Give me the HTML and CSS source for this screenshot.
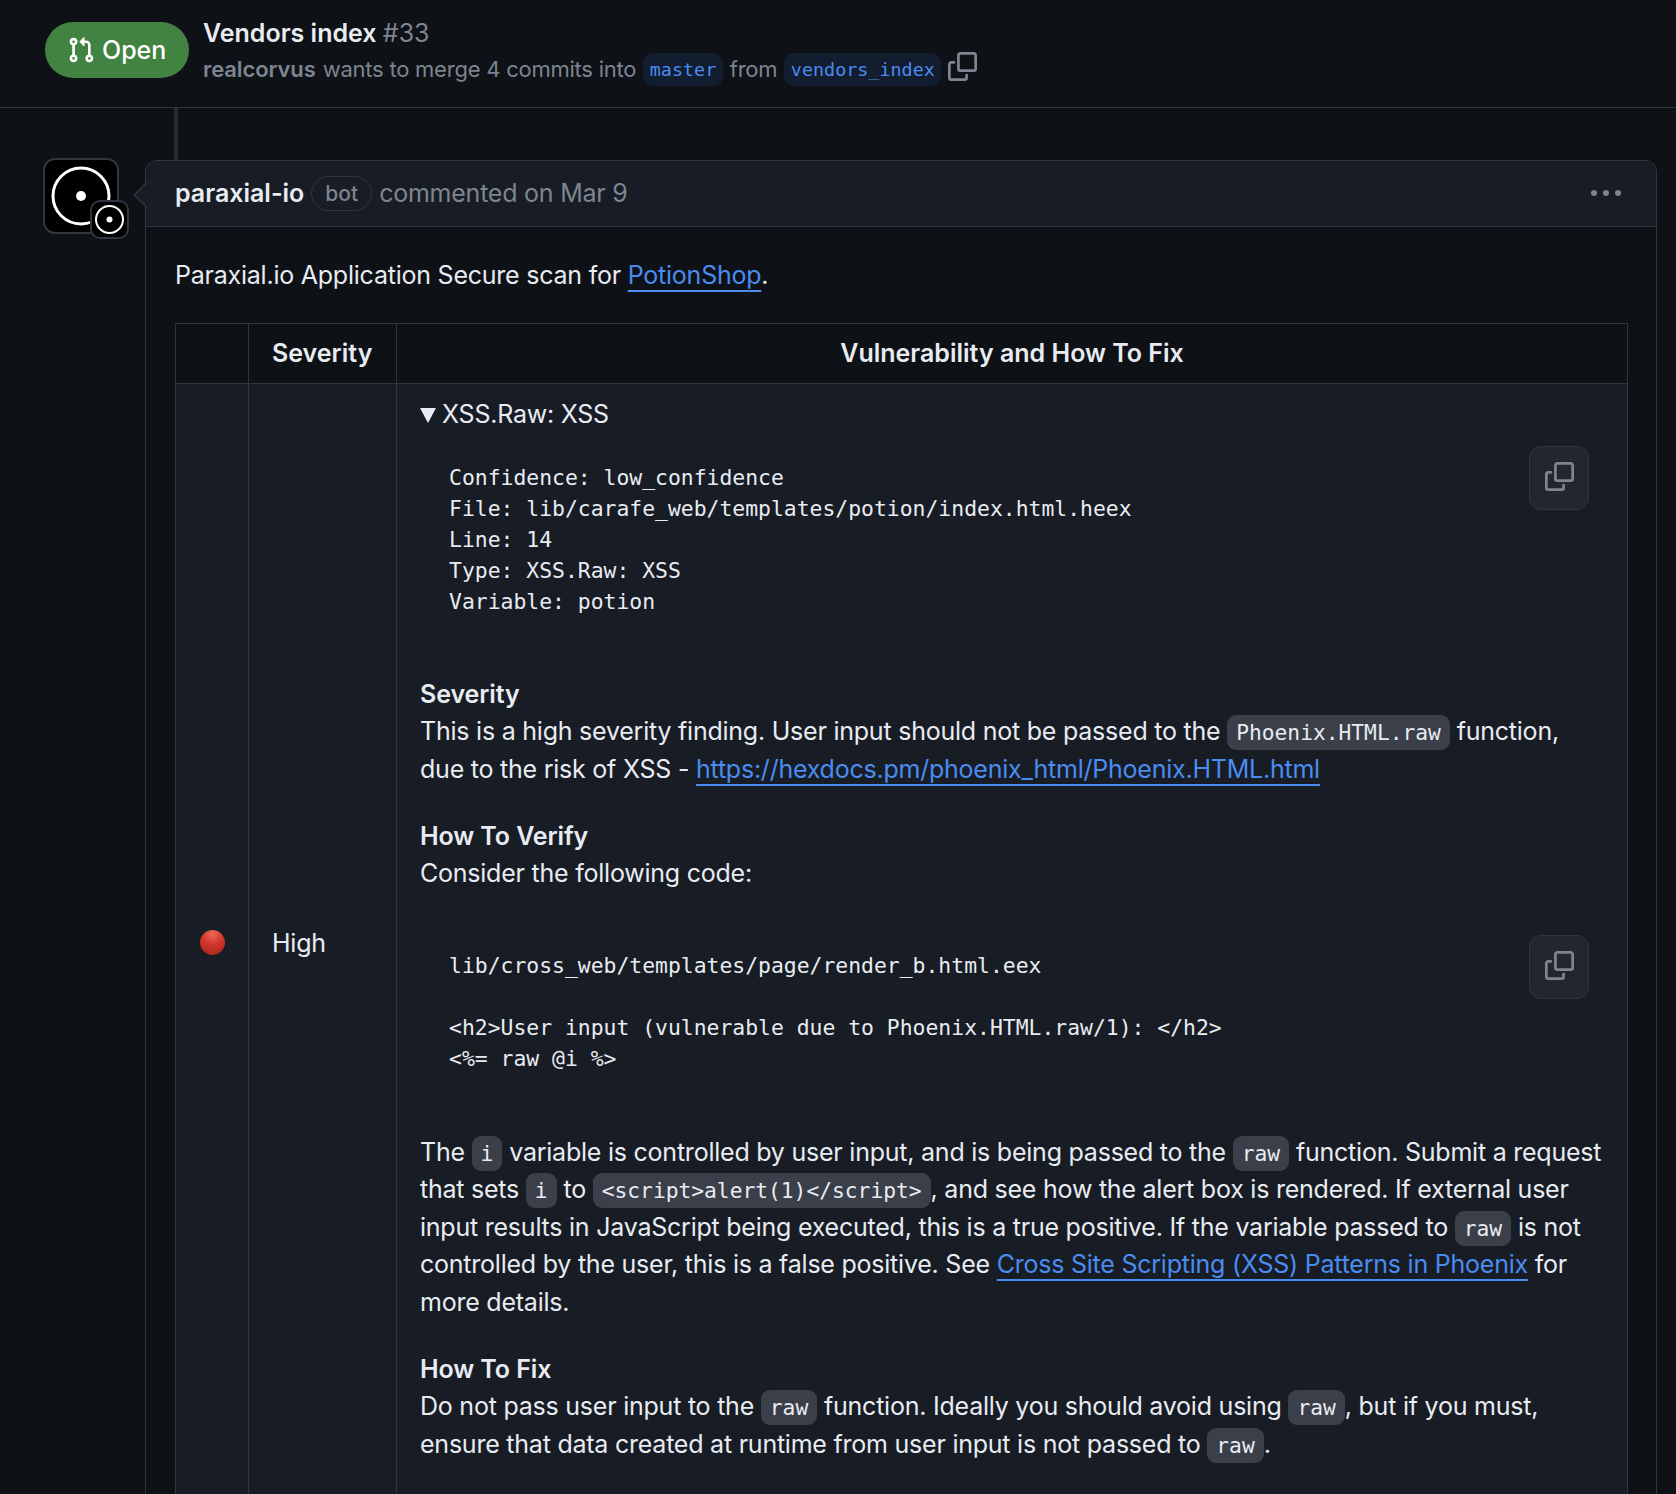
FILE: index.html
```html
<!DOCTYPE html>
<html lang="en">
<head>
<meta charset="utf-8">
<title>Vendors index #33</title>
<link rel="stylesheet" href="styles.css">
</head>
<body>
<svg class="defs" width="0" height="0" aria-hidden="true">
  <symbol id="copy" viewBox="0 0 16 16"><path d="M0 6.75C0 5.784.784 5 1.75 5h1.5a.75.75 0 0 1 0 1.5h-1.5a.25.25 0 0 0-.25.25v7.5c0 .138.112.25.25.25h7.5a.25.25 0 0 0 .25-.25v-1.5a.75.75 0 0 1 1.5 0v1.5A1.75 1.75 0 0 1 9.25 16h-7.5A1.75 1.75 0 0 1 0 14.25Z"/><path d="M5 1.75C5 .784 5.784 0 6.75 0h7.5C15.216 0 16 .784 16 1.75v7.5A1.75 1.75 0 0 1 14.25 11h-7.5A1.75 1.75 0 0 1 5 9.25Zm1.75-.25a.25.25 0 0 0-.25.25v7.5c0 .138.112.25.25.25h7.5a.25.25 0 0 0 .25-.25v-7.5a.25.25 0 0 0-.25-.25Z"/></symbol>
</svg>
<header class="pr-header">
  <span class="state">
    <svg class="state-icon" viewBox="0 0 16 16"><path d="M1.5 3.25a2.25 2.25 0 1 1 3 2.122v5.256a2.251 2.251 0 1 1-1.5 0V5.372A2.25 2.25 0 0 1 1.5 3.25Zm5.677-.177L9.573.677A.25.25 0 0 1 10 .854V2.5h1A2.5 2.5 0 0 1 13.5 5v5.628a2.251 2.251 0 1 1-1.5 0V5a1 1 0 0 0-1-1h-1v1.646a.25.25 0 0 1-.427.177L7.177 3.427a.25.25 0 0 1 0-.354ZM3.75 2.5a.75.75 0 1 0 0 1.5.75.75 0 0 0 0-1.5Zm0 9.5a.75.75 0 1 0 0 1.5.75.75 0 0 0 0-1.5Zm8.25.75a.75.75 0 1 0 1.5 0 .75.75 0 0 0-1.5 0Z"/></svg>
    <span class="state-label">Open</span>
  </span>
  <div class="pr-meta">
    <h1 class="pr-title">Vendors index <span class="pr-num">#33</span></h1>
    <div class="pr-sub"><strong class="pr-author">realcorvus</strong> <span>wants to merge 4 commits into</span> <span class="branch">master</span> <span>from</span> <span class="branch">vendors_index</span> <svg class="pr-copy"><use href="#copy"/></svg></div>
  </div>
</header>
<main class="timeline">
  <div class="stem"></div>
  <div class="comment-row">
    <div class="avatar">
      <svg class="avatar-main" viewBox="0 0 76 76"><rect x="1" y="1" width="74" height="74" rx="11" fill="#000" stroke="#30363d" stroke-width="2"/><circle cx="38" cy="38" r="28" fill="none" stroke="#fff" stroke-width="3"/><circle cx="38" cy="38" r="5" fill="#fff"/></svg>
      <svg class="avatar-badge" viewBox="0 0 39 39"><rect x="1" y="1" width="37" height="37" rx="9" fill="#000" stroke="#30363d" stroke-width="2"/><circle cx="19.5" cy="19.5" r="13.5" fill="none" stroke="#fff" stroke-width="2"/><circle cx="19.5" cy="19.5" r="3" fill="#fff"/></svg>
    </div>
    <article class="comment">
      <svg class="caret" viewBox="0 0 14 26"><path d="M14 0.5 L1 13 L14 25.5" fill="#181c24" stroke="#30363d" stroke-width="1.5"/></svg>
      <div class="comment-head">
        <strong class="c-author">paraxial-io</strong>
        <span class="bot">bot</span>
        <span class="c-when">commented on Mar 9</span>
        <span class="kebab"><i></i><i></i><i></i></span>
      </div>
      <div class="comment-body">
        <p class="intro">Paraxial.io Application Secure scan for <a href="#">PotionShop</a>.</p>
        <table class="findings">
          <thead>
            <tr><th class="col-dot"></th><th class="col-sev">Severity</th><th>Vulnerability and How To Fix</th></tr>
          </thead>
          <tbody>
            <tr>
              <td class="col-dot"><span class="dot"></span></td>
              <td class="col-sev">High</td>
              <td class="detail">
                <div class="summary"><span class="tri"></span>XSS.Raw: XSS</div>
                <div class="snippet first">
<pre>Confidence: low_confidence
File: lib/carafe_web/templates/potion/index.html.heex
Line: 14
Type: XSS.Raw: XSS
Variable: potion</pre>
                  <span class="copy-btn"><svg><use href="#copy"/></svg></span>
                </div>
                <p class="para"><strong>Severity</strong><br>This is a high severity finding. User input should not be passed to the <code>Phoenix.HTML.raw</code> function, due to the risk of XSS - <a href="#">https://hexdocs.pm/phoenix_html/Phoenix.HTML.html</a></p>
                <p class="para"><strong>How To Verify</strong><br>Consider the following code:</p>
                <div class="snippet">
<pre>lib/cross_web/templates/page/render_b.html.eex

&lt;h2&gt;User input (vulnerable due to Phoenix.HTML.raw/1): &lt;/h2&gt;
&lt;%= raw @i %&gt;</pre>
                  <span class="copy-btn"><svg><use href="#copy"/></svg></span>
                </div>
                <p class="para">The <code>i</code> variable is controlled by user input, and is being passed to the <code>raw</code> function. Submit a request that sets <code>i</code> to <code>&lt;script&gt;alert(1)&lt;/script&gt;</code>, and see how the alert box is rendered. If external user input results in JavaScript being executed, this is a true positive. If the variable passed to <code>raw</code> is not controlled by the user, this is a false positive. See <a href="#">Cross Site Scripting (XSS) Patterns in Phoenix</a> for more details.</p>
                <p class="para last"><strong>How To Fix</strong><br>Do not pass user input to the <code>raw</code> function. Ideally you should avoid using <code>raw</code>, but if you must, ensure that data created at runtime from user input is not passed to <code>raw</code>.</p>
              </td>
            </tr>
          </tbody>
        </table>
      </div>
    </article>
  </div>
</main>
</body>
</html>
```
FILE: styles.css
```css
* { box-sizing: border-box; }
html, body { margin: 0; height: 1494px; overflow: hidden; }
body {
  background: #0e1116;
  color: #e8ecf2;
  font-family: Inter, "Liberation Sans", sans-serif;
  font-size: 25px;
  line-height: 37.5px;
  letter-spacing: -0.23px;
}
strong, h1, th { letter-spacing: 0; }
.defs { position: absolute; }
a { color: #4a8cf0; text-decoration: underline; text-underline-offset: 6px; text-decoration-thickness: 2px; }

.pr-header {
  display: flex;
  align-items: center;
  gap: 14px;
  height: 108px;
  padding: 0 0 0 45px;
  border-bottom: 1px solid #30363d;
}
.state {
  display: inline-flex;
  align-items: center;
  gap: 7px;
  width: 144px;
  height: 56px;
  margin-top: -8px;
  padding-left: 22px;
  border-radius: 28px;
  background: #428341;
  color: #fff;
  font-weight: 500;
  font-size: 25px;
  letter-spacing: 0;
}
.state-label { padding-top: 2px; }
.state-icon { width: 28px; height: 28px; fill: #fff; }
.pr-meta { margin-top: -6px; }
.pr-title { margin: 0; font-size: 25px; line-height: 37px; font-weight: 600; }
.pr-num { color: #7d8590; font-weight: 400; }
.pr-sub { margin-top: -1px; color: #7d8590; font-size: 22px; line-height: 36px; white-space: nowrap; display: flex; align-items: center; gap: 7px; }
.pr-author { font-weight: 600; letter-spacing: -0.1px; }
.branch {
  font-family: "DejaVu Sans Mono", monospace;
  font-size: 18.4px;
  line-height: 33px;
  padding: 0 6.5px;
  margin-top: 2px;
  border-radius: 9px;
  background: #121d2f;
  color: #4a8cf0;
  letter-spacing: 0;
}
.pr-copy { width: 29px; height: 29px; fill: #7d8590; margin: -4px 0 0 0; }

.timeline { padding: 0 19px 0 43px; }
.stem { width: 4px; height: 52px; margin-left: 131px; background: #262c34; }
.comment-row { display: flex; gap: 26px; }
.avatar { position: relative; width: 76px; height: 76px; flex: none; margin-top: -2px; }
.avatar-main { display: block; width: 76px; height: 76px; }
.avatar-badge { position: absolute; left: 47px; top: 42px; width: 39px; height: 39px; }
.comment { position: relative; flex: 1; min-width: 0; border: 1px solid #30363d; border-bottom: 0; border-radius: 12px 12px 0 0; }
.caret { position: absolute; left: -13px; top: 21px; width: 14px; height: 26px; }
.comment-head {
  display: flex; align-items: center;
  height: 66px; padding: 0 35px 0 29px;
  background: #181c24;
  border-bottom: 1px solid #30363d;
  border-radius: 11px 11px 0 0;
}
.c-author { font-weight: 600; }
.bot {
  margin-left: 7px; padding: 0 13px; height: 35px; line-height: 33px;
  border: 1px solid #30363d; border-radius: 18px;
  color: #7d8590; font-size: 21px; font-weight: 500; letter-spacing: 0;
}
.c-when { margin-left: 7px; color: #7d8590; }
.kebab { margin: -2px 0 0 auto; display: flex; gap: 6px; }
.kebab i { display: block; width: 6px; height: 6px; border-radius: 50%; background: #7d8590; }

.comment-body { padding: 29px 28px 0 29px; }
.intro { margin: 0 0 29px; line-height: 38px; }
.findings { width: 1453px; border-collapse: collapse; table-layout: fixed; }
.findings th, .findings td { border: 1px solid #30363d; padding: 10px 23px; }
.findings th { height: 60px; font-weight: 600; text-align: center; background: #0e1116; }
.findings td { background: #181c24; }
.col-dot { width: 73px; }
.col-sev { width: 148px; text-align: left; }
.findings th.col-sev { text-align: left; }
.dot {
  display: block; width: 25px; height: 25px; border-radius: 50%; margin: -3px 0 0 1px;
  background: radial-gradient(circle at 50% 15%, #ee6a5c 0, #d2352a 45%, #a3241b 100%);
}
.findings td.detail { padding: 12px 23px 10px 23px; }
.summary { display: flex; align-items: center; gap: 6px; }
.tri { width: 0; height: 0; margin-top: 1px; border-left: 8.5px solid transparent; border-right: 8.5px solid transparent; border-top: 15px solid #e8ecf2; }
.snippet { position: relative; margin: 0 0 25px; padding: 28px 29px 34.5px; }
.snippet.first { padding-top: 28px; padding-bottom: 34px; }
.snippet pre {
  margin: 0;
  font-family: "DejaVu Sans Mono", monospace;
  font-size: 21.4px;
  line-height: 31px;
  letter-spacing: 0;
}
.copy-btn {
  position: absolute; right: 15px; top: 13px; width: 60px; height: 64px;
  display: flex; align-items: center; justify-content: center;
  background: #22262e; border: 1px solid #30363d; border-radius: 12px;
}
.snippet.first .copy-btn { top: 12px; }
.copy-btn svg { width: 29px; height: 29px; fill: #7d8590; margin-top: -3px; }
.para { margin: 0 0 29.5px; }
.para.last { margin-bottom: 31px; }
.para strong { font-weight: 600; letter-spacing: -0.1px; }
code {
  font-family: "DejaVu Sans Mono", monospace;
  font-size: 21.25px;
  line-height: 1;
  letter-spacing: 0;
  padding: 5px 9px;
  border-radius: 9px;
  background: rgba(110,118,129,.4);
}
```
